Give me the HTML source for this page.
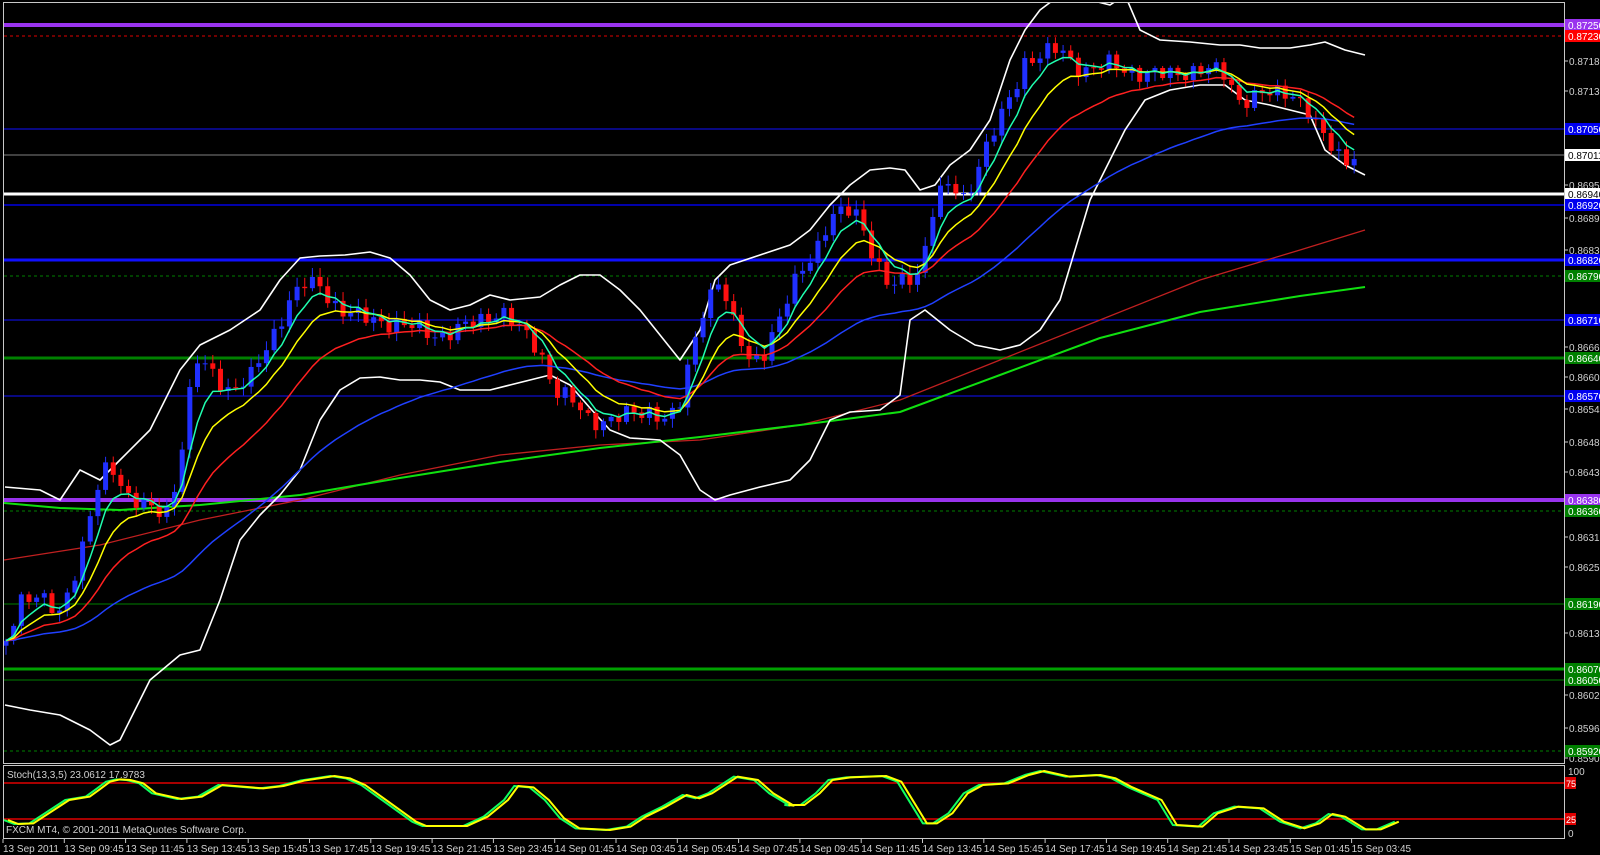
<!DOCTYPE html>
<html><head><meta charset="utf-8">
<style>
html,body{margin:0;padding:0;background:#000;overflow:hidden;}
svg{display:block;font-family:"Liberation Sans",sans-serif;}
</style></head>
<body>
<svg id="s" width="1600" height="855" viewBox="0 0 1600 855" xmlns="http://www.w3.org/2000/svg">
<rect x="0" y="0" width="1600" height="855" fill="#000"/>
<defs><clipPath id="cm"><rect x="4" y="3" width="1560" height="760"/></clipPath>
<clipPath id="cs"><rect x="4" y="766" width="1560" height="72"/></clipPath></defs>
<g id="hl"></g>
<g id="main" clip-path="url(#cm)"></g>
<line x1="4" y1="783" x2="1564" y2="783" stroke="#e00000" stroke-width="1.5"/>
<line x1="4" y1="819" x2="1564" y2="819" stroke="#e00000" stroke-width="1.5"/>
<g id="stoch" clip-path="url(#cs)"></g>
<rect x="3.5" y="2.5" width="1561" height="761" fill="none" stroke="#c8c8c8" stroke-width="1"/>
<rect x="3.5" y="765.5" width="1561" height="73" fill="none" stroke="#c8c8c8" stroke-width="1"/>
<g id="ax" font-size="10" fill="#d0d0d0"></g>
<text x="7" y="778" font-size="10" fill="#d0d0d0">Stoch(13,3,5) 23.0612 17.9783</text>
<text x="6" y="833" font-size="10" fill="#d0d0d0">FXCM MT4, © 2001-2011 MetaQuotes Software Corp.</text>
<text x="1568" y="775" font-size="10" fill="#d0d0d0">100</text>
<text x="1568" y="837" font-size="10" fill="#d0d0d0">0</text>
<rect x="1565" y="777" width="11" height="12" fill="#e00000"/><text x="1566" y="787" font-size="9" fill="#fff">75</text>
<rect x="1565" y="813" width="11" height="12" fill="#e00000"/><text x="1566" y="823" font-size="9" fill="#fff">25</text>
</svg>
<script>
var NS="http://www.w3.org/2000/svg";
function el(p,t,a,txt){var e=document.createElementNS(NS,t);for(var k in a)e.setAttribute(k,a[k]);if(txt!==undefined)e.textContent=txt;p.appendChild(e);return e;}
var hl=document.getElementById('hl'),main=document.getElementById('main'),st=document.getElementById('stoch'),ax=document.getElementById('ax');
var lv=[[25,'#9933ee',4,'','0.87250','#9933ee','#fff'],[36,'#e00000',1,'3,3','0.87230','#ff0000','#fff'],[129,'#1010ff',1,'','0.87050','#0000ee','#fff'],
[155,'#808080',1,'','0.87011','#ffffff','#000'],[194,'#ffffff',3,'','0.86940','#ffffff','#000'],[205,'#0000aa',2,'','0.86920','#0000ee','#fff'],
[260,'#1010ff',3,'','0.86820','#0000ee','#fff'],[276,'#008000',1,'3,3','0.86790','#008000','#fff'],[320,'#1010ff',1,'','0.86710','#0000ee','#fff'],
[358,'#008000',3,'','0.86640','#008000','#fff'],[396,'#1010ff',1,'','0.86570','#0000ee','#fff'],[500,'#9933ee',4,'','0.86380','#9933ee','#fff'],
[511,'#008000',1,'3,3','0.86360','#008000','#fff'],[604,'#008000',1,'','0.86190','#008000','#fff'],[669,'#00a000',3,'','0.86070','#008000','#fff'],
[680,'#008000',1,'','0.86050','#008000','#fff'],[751,'#008000',1,'3,3','0.85920','#008000','#fff']];
var ticks=[[61,'0.87185'],[91,'0.87130'],[185,'0.86955'],[218,'0.86895'],[250,'0.86835'],[347,'0.86660'],[377,'0.86605'],[409,'0.86545'],[442,'0.86485'],[472,'0.86430'],[537,'0.86310'],[567,'0.86255'],[633,'0.86135'],[695,'0.86020'],[728,'0.85960'],[758,'0.85905']];
ticks.forEach(function(t){el(ax,'line',{x1:1564,y1:t[0],x2:1568,y2:t[0],stroke:'#c8c8c8'});el(ax,'text',{x:1569,y:t[0]+4},t[1]);});
lv.forEach(function(l){var a={x1:4,y1:l[0],x2:1564,y2:l[0],stroke:l[1],'stroke-width':l[2]};if(l[3])a['stroke-dasharray']=l[3];el(hl,'line',a);
el(ax,'rect',{x:1565,y:l[0]-6,width:35,height:12,fill:l[5]});el(ax,'text',{x:1568,y:l[0]+4,fill:l[6]},l[4]);});
var tl=['13 Sep 2011','13 Sep 09:45','13 Sep 11:45','13 Sep 13:45','13 Sep 15:45','13 Sep 17:45','13 Sep 19:45','13 Sep 21:45','13 Sep 23:45','14 Sep 01:45','14 Sep 03:45','14 Sep 05:45','14 Sep 07:45','14 Sep 09:45','14 Sep 11:45','14 Sep 13:45','14 Sep 15:45','14 Sep 17:45','14 Sep 19:45','14 Sep 21:45','14 Sep 23:45','15 Sep 01:45','15 Sep 03:45'];
tl.forEach(function(s,i){var x=3+i*61.3;el(ax,'line',{x1:x,y1:839,x2:x,y2:843,stroke:'#c8c8c8'});el(ax,'text',{x:x,y:852},s);});
function interp(p,x){if(x<=p[0][0])return p[0][1];for(var i=1;i<p.length;i++){if(x<=p[i][0]){var a=p[i-1],b=p[i];return a[1]+(b[1]-a[1])*(x-a[0])/(b[0]-a[0]);}}return p[p.length-1][1];}
var path=[[5,640],[20,600],[40,600],[60,610],[80,560],[100,480],[110,460],[130,500],[150,510],[170,510],[185,430],[195,360],[210,370],[230,390],[250,380],[270,340],[290,300],[305,285],[320,285],[340,310],[360,318],[380,320],[400,325],[420,330],[440,335],[460,330],[480,320],[500,310],[520,330],[540,350],[555,390],[570,400],[590,420],[610,420],[630,415],[650,410],[670,420],[680,405],[690,360],[705,300],[720,280],[735,330],[750,360],[765,350],[780,320],[800,270],[815,250],[830,220],[850,210],[860,215],[875,260],[890,290],[905,280],[920,270],[935,200],[950,185],[965,200],[980,160],[1000,120],[1010,100],[1025,60],[1040,55],[1060,50],[1075,65],[1090,70],[1110,65],[1130,70],[1150,75],[1170,75],[1190,70],[1210,70],[1225,75],[1240,100],[1260,95],[1275,95],[1290,90],[1305,105],[1320,135],[1335,150],[1345,160],[1358,150]];
var N=177,X=[],C=[],O=[],H=[],L=[];
for(var i=0;i<N;i++){var x=6+i*7.66;X.push(x);var c=interp(path,x)+7*Math.sin(i*2.3)+4*Math.sin(i*0.9+1);C.push(c);O.push(i?C[i-1]:c+5);
H.push(Math.min(O[i],c)-2-Math.abs(7*Math.sin(i*3.1)));L.push(Math.max(O[i],c)+2+Math.abs(7*Math.cos(i*1.3)));}
function pl(par,pts,col,w){el(par,'polyline',{points:pts.map(function(p){return p.join(',')}).join(' '),fill:'none',stroke:col,'stroke-width':w,'stroke-linejoin':'round'});}
pl(main,[[4,560],[100,545],[200,520],[300,500],[400,475],[500,455],[600,445],[700,440],[800,425],[900,400],[1000,360],[1100,320],[1200,280],[1300,250],[1365,230]],'#c02020',1.3);
pl(main,[[4,503],[60,508],[120,510],[200,505],[300,495],[400,478],[500,462],[600,448],[700,437],[800,425],[900,412],[1000,375],[1100,338],[1200,312],[1300,296],[1365,287]],'#10e010',2);
var ub=[[5,487],[40,490],[60,500],[80,470],[100,480],[120,460],[150,430],[180,370],[200,345],[230,330],[260,310],[280,280],[300,258],[320,256],[345,255],[370,252],[390,258],[410,275],[430,300],[450,310],[470,305],[490,295],[510,300],[540,297],[560,285],[580,275],[600,275],[620,290],[640,310],[660,335],[680,360],[700,330],[715,280],[730,265],[760,255],[790,245],[810,230],[830,205],[850,185],[870,170],[890,168],[905,170],[920,190],[935,185],[950,165],[970,150],[990,120],[1010,60],[1025,30],[1040,10],[1060,-5],[1090,0],[1110,5],[1125,-5],[1140,30],[1160,40],[1190,42],[1220,45],[1240,45],[1260,48],[1290,48],[1310,45],[1325,42],[1345,50],[1365,55]];
var lb=[[5,705],[30,710],[60,715],[90,730],[110,745],[120,740],[130,720],[150,680],[180,655],[200,650],[220,600],[240,540],[260,515],[280,495],[300,470],[320,420],[340,390],[360,378],[380,377],[400,380],[420,380],[440,382],[460,390],[490,390],[510,385],[530,380],[550,375],[570,385],[590,408],[610,430],[630,438],[660,440],[680,455],[700,490],[715,500],[730,495],[760,487],[790,480],[810,460],[830,420],[850,412],[880,410],[900,395],[910,320],[925,310],[950,330],[975,345],[1000,350],[1020,345],[1040,330],[1060,300],[1075,250],[1090,200],[1110,160],[1125,130],[1145,100],[1170,90],[1200,85],[1225,85],[1245,100],[1270,105],[1290,110],[1310,115],[1325,150],[1345,165],[1365,175]];
pl(main,ub,'#ffffff',1.6);pl(main,lb,'#ffffff',1.6);
for(var i=0;i<N;i++){var up=C[i]<O[i];var col=up?'#2030ff':'#ff1010';
el(main,'line',{x1:X[i],y1:H[i],x2:X[i],y2:L[i],stroke:col,'stroke-width':1});
var t=Math.min(O[i],C[i]),h=Math.max(1,Math.abs(O[i]-C[i]));el(main,'rect',{x:X[i]-2.5,y:t,width:5,height:h,fill:col});}
function ema(n){var k=2/(n+1),e=C[0],r=[];for(var i=0;i<N;i++){e=e+k*(C[i]-e);r.push([X[i],e]);}return r;}
pl(main,ema(50),'#2040ff',1.5);pl(main,ema(20),'#ff2020',1.5);pl(main,ema(10),'#ffff00',1.5);pl(main,ema(5),'#20ffb0',1.5);
// stochastic (hand traced)
var z1=[[0,180],[20,192],[50,190],[80,160],[120,120],[160,110],[180,88],[200,65],[220,58],[240,60],[265,70],[290,100],[340,117],[380,110],[420,75],[460,80],[500,85],[540,78],[580,62],[640,48],[670,55],[700,75],[800,185],[820,198],[900,198],[940,170],[980,120],[1000,78],[1030,82],[1060,120],[1090,175],[1120,205],[1180,210],[1220,200],[1250,170],[1290,140],[1330,105],[1355,115],[1380,100],[1430,50],[1470,60],[1500,100],[1540,137]];
var z2=[[10,135],[40,135],[70,100],[95,60],[130,52],[200,48],[230,65],[280,190],[300,190],[330,160],[360,100],[390,75],[440,70],[480,45],[510,33],[560,50],[620,45],[650,55],[680,80],[740,120],[770,195],[820,200],[850,160],[890,140],[940,145],[980,185],[1020,205],[1050,190],[1075,162],[1100,170],[1140,208],[1170,208],[1205,185]];
var sg=z1.map(function(p){return [4+p[0]/1.96,760+p[1]/3]}).concat(z2.map(function(p){return [780+p[0]/1.96,760+p[1]/3]}));
pl(st,sg,'#10ff60',2);
pl(st,sg.map(function(p){return [p[0]+4,p[1]]}),'#ffff00',2);
</script>
</body></html>
